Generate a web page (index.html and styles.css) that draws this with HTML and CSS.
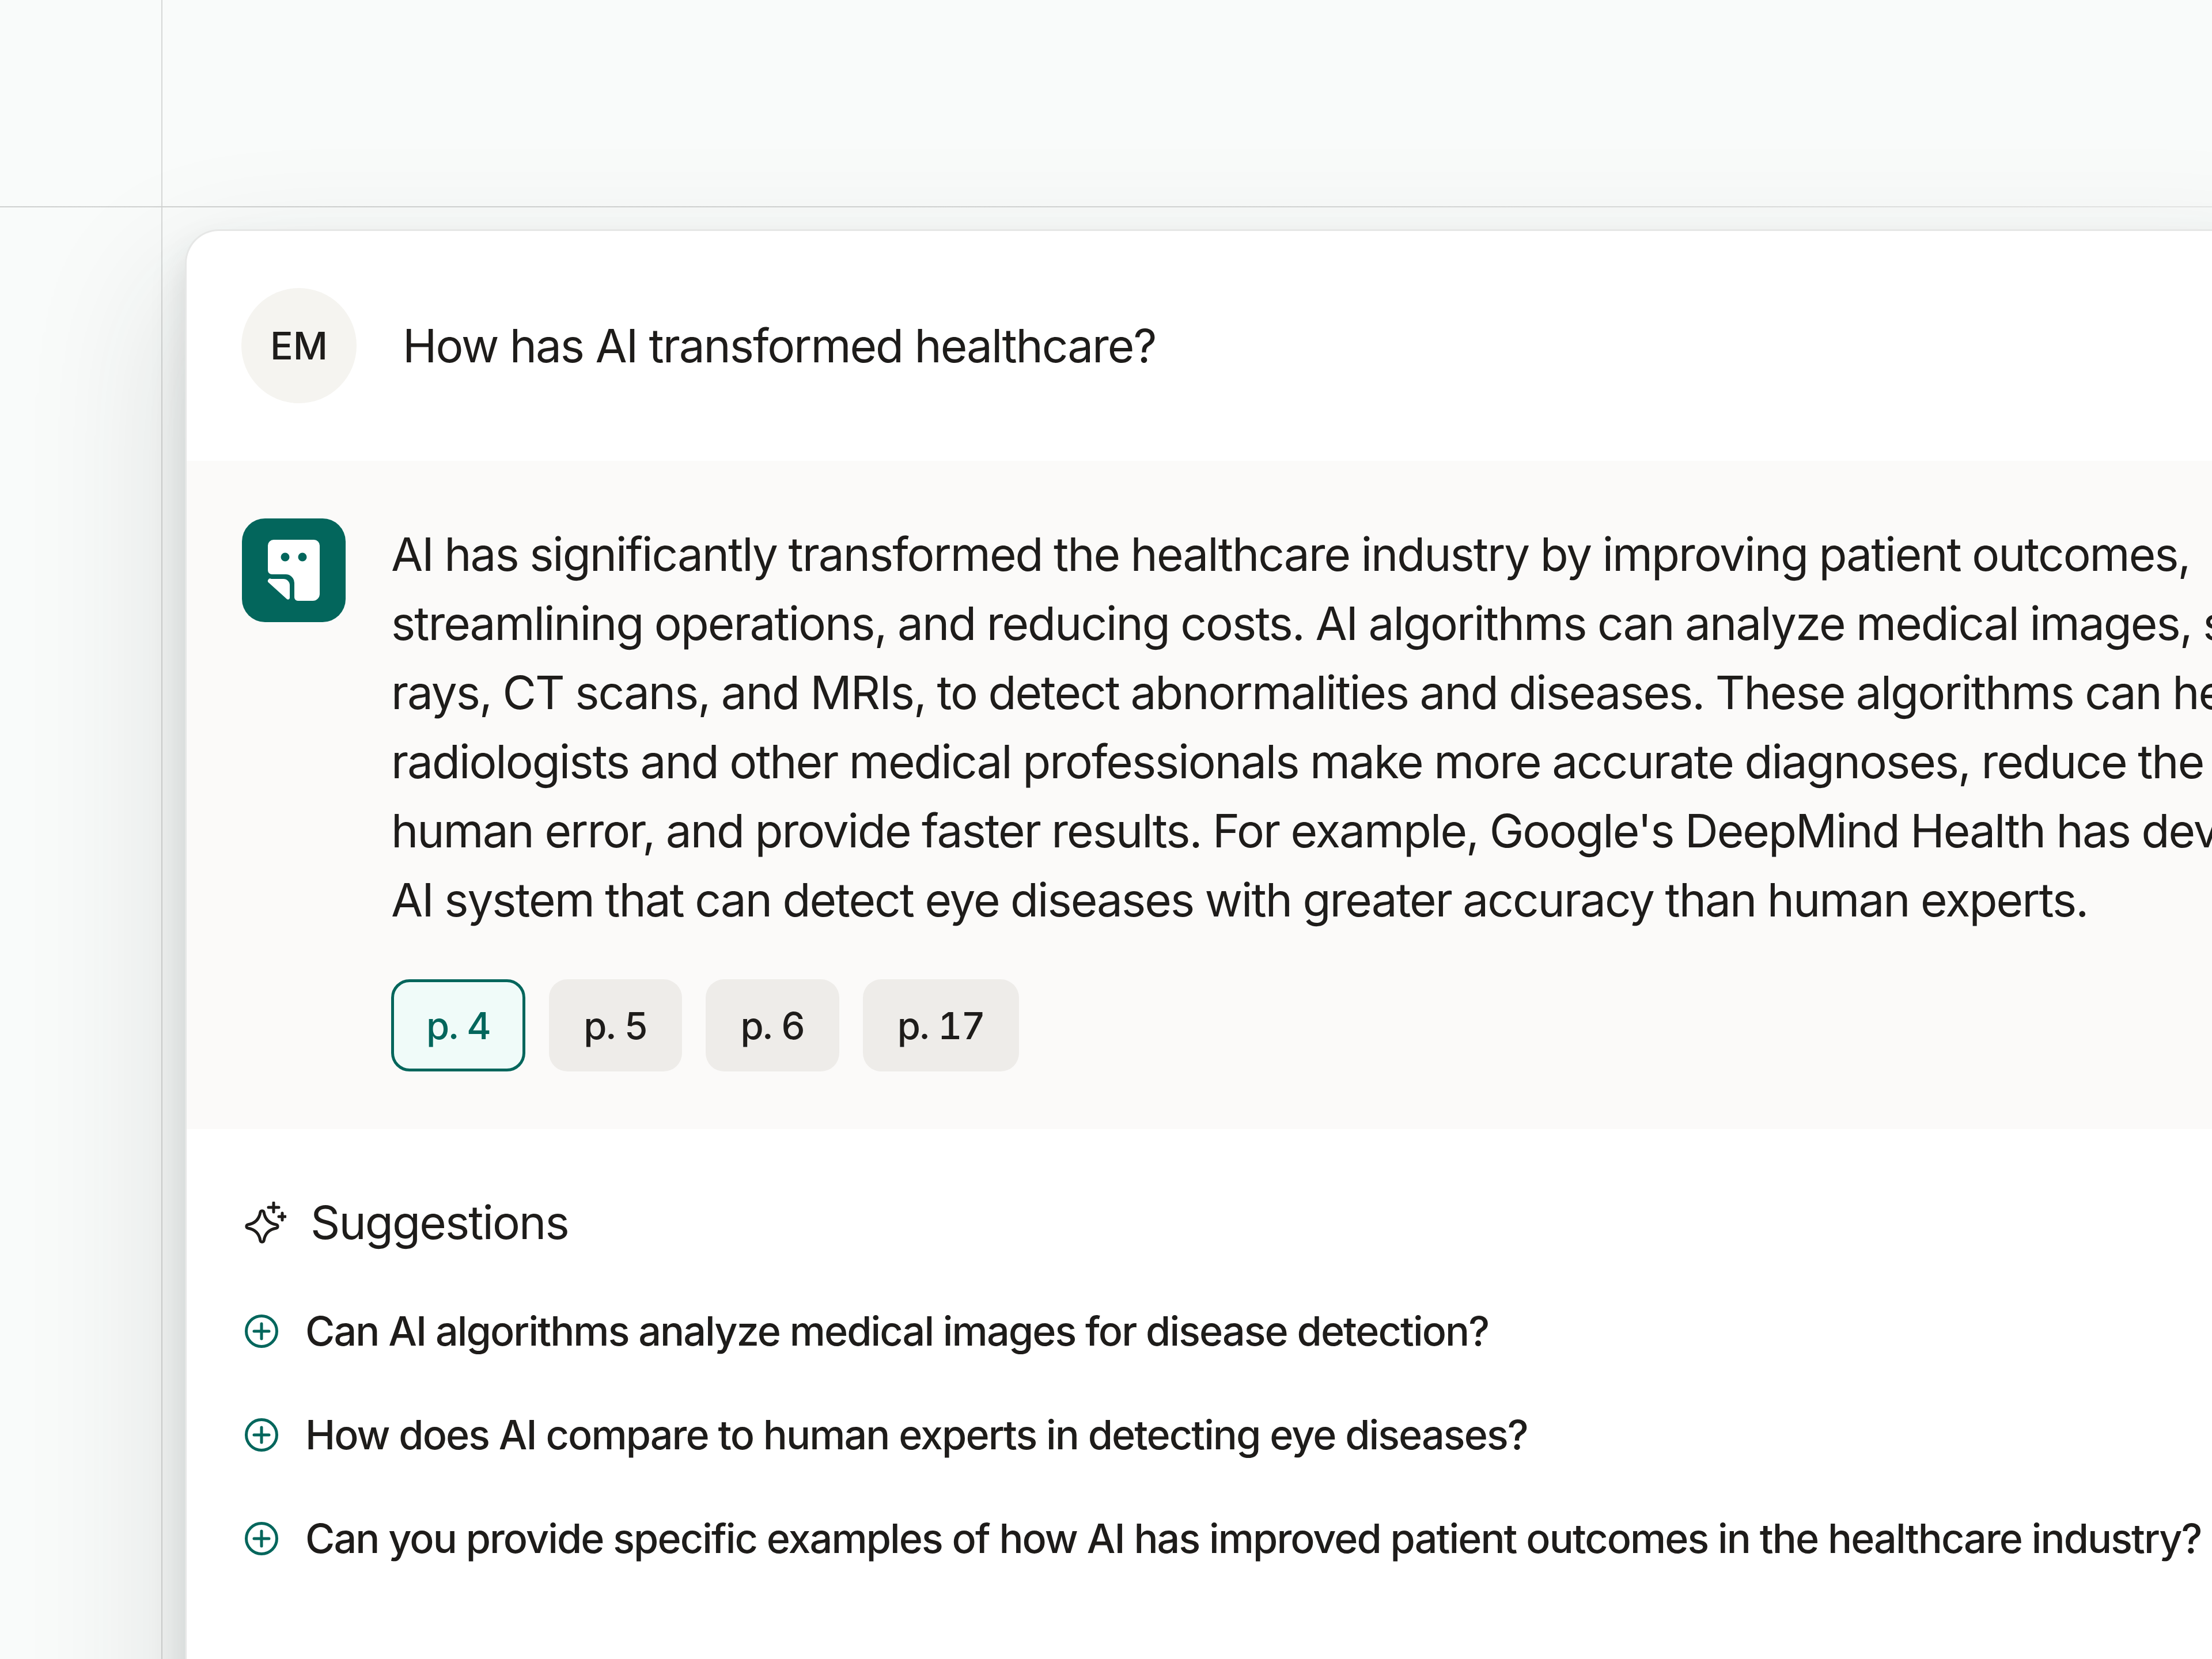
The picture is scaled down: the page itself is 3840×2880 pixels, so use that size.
FILE: index.html
```html
<!DOCTYPE html>
<html lang="en">
<head>
<meta charset="utf-8">
<title>Chat</title>
<link rel="stylesheet" href="styles.css">
</head>
<body>
<div class="canvas">
  <div class="grid-v"></div>
  <div class="grid-h"></div>
  <main class="card">
    <section class="question">
      <div class="avatar">EM</div>
      <p class="question-text">How has AI transformed healthcare?</p>
    </section>
    <section class="answer">
      <svg class="logo" viewBox="0 0 180 180" aria-hidden="true">
        <rect width="180" height="180" rx="40" fill="#03665c"/>
        <path fill="#fff" d="M55 37H125a10 10 0 0 1 10 10V131a12 12 0 0 1-12 12H97a6 6 0 0 1-6-6V112a15 15 0 0 0-15-15H52a7 7 0 0 1-7-7V47a10 10 0 0 1 10-10Z"/>
        <path fill="#fff" d="M51 105H72a11 11 0 0 1 11 11V138a3 3 0 0 1-5 2L47 112a4 4 0 0 1 4-7Z"/>
        <circle cx="75" cy="67" r="7.5" fill="#03665c"/>
        <circle cx="105" cy="67" r="7.5" fill="#03665c"/>
      </svg>
      <div class="answer-body">
        <p class="answer-text">AI has significantly transformed the healthcare industry by improving patient outcomes,<br>streamlining operations, and reducing costs. AI algorithms can analyze medical images, such as X-<br>rays, CT scans, and MRIs, to detect abnormalities and diseases. These algorithms can help<br>radiologists and other medical professionals make more accurate diagnoses, reduce the risk of<br>human error, and provide faster results. For example, Google's DeepMind Health has developed an<br>AI system that can detect eye diseases with greater accuracy than human experts.</p>
        <div class="chips">
          <span class="chip chip-active">p. 4</span>
          <span class="chip">p. 5</span>
          <span class="chip">p. 6</span>
          <span class="chip">p. 17</span>
        </div>
      </div>
    </section>
    <section class="suggestions">
      <h2 class="suggestions-title">
        <svg class="sparkle" viewBox="0 0 72 73" aria-hidden="true">
          <path d="M27 18A3.2 3.2 0 0 1 33 18Q36 37 55 40A3.2 3.2 0 0 1 55 46Q36 49 33 68A3.2 3.2 0 0 1 27 68Q24 49 5 46A3.2 3.2 0 0 1 5 40Q24 37 27 18Z"/>
          <path d="M50 2V18M41 10H59M65 20V32M59 26H71"/>
        </svg>
        Suggestions
      </h2>
      <ul class="suggestion-list">
        <li class="suggestion"><svg class="plus" viewBox="0 0 58 58" aria-hidden="true"><circle cx="29" cy="29" r="26.5"/><path d="M29 16V42M16 29H42"/></svg>Can AI algorithms analyze medical images for disease detection?</li>
        <li class="suggestion"><svg class="plus" viewBox="0 0 58 58" aria-hidden="true"><circle cx="29" cy="29" r="26.5"/><path d="M29 16V42M16 29H42"/></svg>How does AI compare to human experts in detecting eye diseases?</li>
        <li class="suggestion"><svg class="plus" viewBox="0 0 58 58" aria-hidden="true"><circle cx="29" cy="29" r="26.5"/><path d="M29 16V42M16 29H42"/></svg>Can you provide specific examples of how AI has improved patient outcomes in the healthcare industry?</li>
      </ul>
    </section>
  </main>
</div>
</body>
</html>
```

FILE: styles.css
```css
* { box-sizing: border-box; }
html, body { margin: 0; padding: 0; width: 3840px; height: 2880px; overflow: hidden; }
body {
  background: #f9fbfa;
  color: #1e1c1a;
  font-family: Inter, "Liberation Sans", sans-serif;
}
.canvas {
  position: relative;
  width: 3840px;
  height: 2880px;
  overflow: hidden;
  padding: 401px 0 0 324px;
}
.grid-v {
  position: absolute; left: 280px; top: 0; bottom: 0; width: 2px;
  background: #d6d8d7;
}
.grid-h {
  position: absolute; left: 0; right: 0; top: 358px; height: 2px;
  background: linear-gradient(90deg, #cfd1d0 0, #d4d6d5 60%, #e6e7e6 100%);
}
.card {
  position: relative;
  width: 3700px;
  height: 2700px;
  background: #fff;
  border-radius: 56px 0 0 0;
  box-shadow: 0 0 0 3px #e6e7e6, -6px 30px 60px rgba(40, 50, 45, .13), -30px 90px 300px rgba(40, 50, 45, .13);
  overflow: hidden;
}
.question {
  display: flex;
  align-items: center;
  gap: 80px;
  height: 399px;
  padding: 0 0 2px 95px;
}
.avatar {
  width: 200px; height: 200px;
  border-radius: 50%;
  background: #f5f4f0;
  display: flex; align-items: center; justify-content: center;
  font-size: 66px;
  font-weight: 500;
}
.question-text { margin: 0; font-size: 80px; font-weight: 430; letter-spacing: -2.05px; white-space: nowrap; }
.answer {
  display: flex;
  gap: 79px;
  background: #fbfaf9;
  height: 1160px;
  padding: 100px 0 0 96px;
}
.logo { width: 180px; height: 180px; flex: none; }
.answer-text {
  margin: 2px 0 0;
  font-size: 80px;
  font-weight: 430;
  line-height: 120px;
  letter-spacing: -2px;
  word-spacing: -1px;
  white-space: nowrap;
}
.chips { display: flex; gap: 41px; margin-top: 78px; }
.chip {
  display: flex; align-items: center; justify-content: center;
  height: 160px;
  padding: 0 60px;
  border-radius: 32px;
  background: #eeece9;
  font-size: 65px;
  font-weight: 500;
  letter-spacing: -1.5px;
  font-variant-numeric: tabular-nums;
}
.chip-active {
  background: #f0fbf9;
  border: 5px solid #03665c;
  color: #03665c;
  padding: 0 56px;
}
.suggestions { padding: 114px 0 0 101px; }
.suggestions-title {
  display: flex; align-items: center; gap: 42px;
  margin: 0;
  font-size: 80px;
  font-weight: 400;
  line-height: 96px;
  letter-spacing: -1.9px;
}
.sparkle {
  width: 72px; height: 73px;
  fill: none; stroke: #1e1c1a; stroke-width: 5; stroke-linecap: round; stroke-linejoin: round;
}
.suggestion-list { list-style: none; margin: 96px 0 0; padding: 0; display: flex; flex-direction: column; gap: 90px; }
.suggestion {
  display: flex; align-items: center; gap: 47px;
  font-size: 70px;
  font-weight: 500;
  line-height: 90px;
  letter-spacing: -1.9px;
  white-space: nowrap;
}
.plus {
  width: 58px; height: 58px; flex: none;
  fill: none; stroke: #03665c; stroke-width: 5; stroke-linecap: round;
}
```
